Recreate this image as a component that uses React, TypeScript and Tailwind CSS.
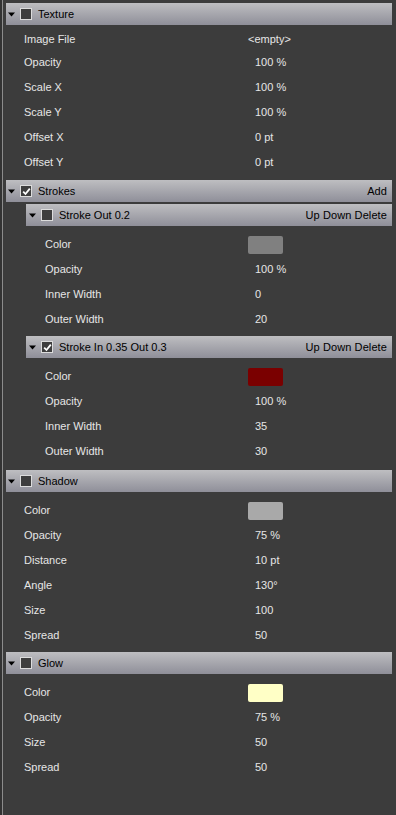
import React from "react";

type Row = { label: string; value?: string; swatch?: string; wide?: boolean };

function Arrow() {
  return (
    <svg width="7" height="5" viewBox="0 0 7 5" className="shrink-0">
      <path d="M0 0.5 L7 0.5 L3.5 4.5 Z" fill="#000" />
    </svg>
  );
}

function Check({ checked }: { checked?: boolean }) {
  return (
    <div className="w-[12px] h-[12px] shrink-0 border border-[#dcdcdc] bg-[#3e3e3e] flex items-center justify-center">
      {checked && (
        <svg width="9" height="9" viewBox="0 0 9 9">
          <path d="M1.2 4.6 L3.5 7 L7.8 1.6" stroke="#fff" strokeWidth="1.8" fill="none" />
        </svg>
      )}
    </div>
  );
}

function Header({ title, checked, actions, sub }: { title: string; checked?: boolean; actions?: string; sub?: boolean }) {
  return (
    <div
      className={
        "h-[22px] flex items-center bg-gradient-to-b from-[#bebec1] to-[#8f8f99] text-black " +
        (sub ? "ml-[23px] pl-[3px]" : "ml-[3px] pl-[2px]")
      }
    >
      <Arrow />
      <div className="w-[5px]" />
      <Check checked={checked} />
      <span className="ml-[6px]">{title}</span>
      {actions && <span className="ml-auto pr-[5px] tracking-[0.1px]">{actions}</span>}
    </div>
  );
}

function Rows({ rows, sub, firstShort }: { rows: Row[]; sub?: boolean; firstShort?: boolean }) {
  return (
    <div>
      {rows.map((r, i) => (
        <div
          key={r.label}
          className={
            "flex items-center text-[#e6e6e6] " +
            (firstShort && i === 0 ? "h-[22px] " : "h-[25px] ") +
            (sub ? "pl-[42px]" : "pl-[21px]")
          }
        >
          <span className={sub ? "w-[203px]" : "w-[224px]"}>{r.label}</span>
          {r.swatch ? (
            <div className="w-[35px] h-[18px] rounded-[2px]" style={{ background: r.swatch }} />
          ) : r.wide ? (
            <span>{r.value}</span>
          ) : (
            <span className="pl-[7px]">{r.value}</span>
          )}
        </div>
      ))}
    </div>
  );
}

export default function App() {
  return (
    <div
      className="w-[396px] h-[815px] bg-[#3c3c3c] text-[11px] overflow-hidden flex"
      style={{ fontFamily: '"Liberation Sans", Arial, sans-serif' }}
    >
      <div className="w-[2px] h-full bg-[#333]" />
      <div className="w-[1px] h-full bg-[#8c8c8c]" />
      <div className="flex-1 pr-[4px] pt-[3px]">
        <Header title="Texture" />
        <div className="h-[3px]" />
        <Rows
          firstShort
          rows={[
            { label: "Image File", value: "<empty>", wide: true },
            { label: "Opacity", value: "100 %" },
            { label: "Scale X", value: "100 %" },
            { label: "Scale Y", value: "100 %" },
            { label: "Offset X", value: "0 pt" },
            { label: "Offset Y", value: "0 pt" },
          ]}
        />
        <div className="h-[5px]" />
        <Header title="Strokes" checked actions="Add" />
        <div className="h-[2px]" />
        <Header title="Stroke Out 0.2" sub actions="Up Down Delete" />
        <div className="h-[6px]" />
        <Rows
          sub
          rows={[
            { label: "Color", swatch: "#808080" },
            { label: "Opacity", value: "100 %" },
            { label: "Inner Width", value: "0" },
            { label: "Outer Width", value: "20" },
          ]}
        />
        <div className="h-[4px]" />
        <Header title="Stroke In 0.35 Out 0.3" sub checked actions="Up Down Delete" />
        <div className="h-[6px]" />
        <Rows
          sub
          rows={[
            { label: "Color", swatch: "#7a0000" },
            { label: "Opacity", value: "100 %" },
            { label: "Inner Width", value: "35" },
            { label: "Outer Width", value: "30" },
          ]}
        />
        <div className="h-[6px]" />
        <Header title="Shadow" />
        <div className="h-[6px]" />
        <Rows
          rows={[
            { label: "Color", swatch: "#a9a9a9" },
            { label: "Opacity", value: "75 %" },
            { label: "Distance", value: "10 pt" },
            { label: "Angle", value: "130°" },
            { label: "Size", value: "100" },
            { label: "Spread", value: "50" },
          ]}
        />
        <div className="h-[4px]" />
        <Header title="Glow" />
        <div className="h-[6px]" />
        <Rows
          rows={[
            { label: "Color", swatch: "#ffffc6" },
            { label: "Opacity", value: "75 %" },
            { label: "Size", value: "50" },
            { label: "Spread", value: "50" },
          ]}
        />
      </div>
    </div>
  );
}
